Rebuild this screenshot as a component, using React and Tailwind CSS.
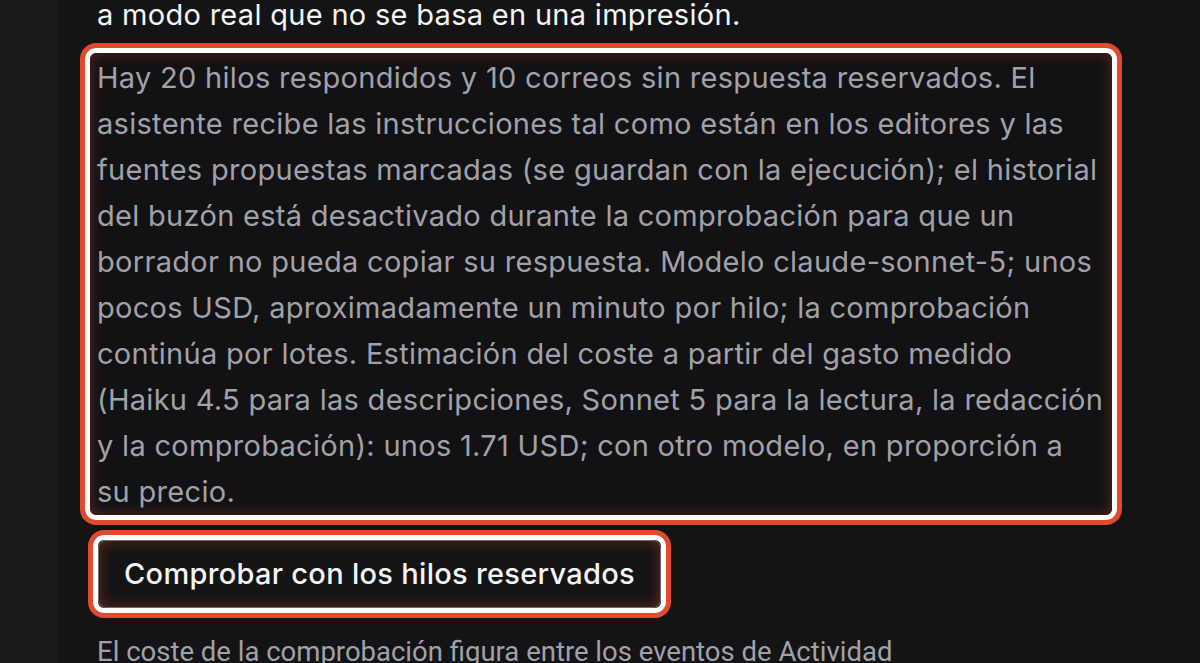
export default function App() {
  return (
    <div className="flex h-[663px] w-full overflow-hidden bg-[#141416]">
      <div className="w-[57px] shrink-0 bg-[#1b1b1e]" />
      <div className="flex min-w-0 flex-1 flex-col pl-[23px] pr-[78px]">
        <p className="-mt-[8px] pl-[17px] font-['Inter',sans-serif] text-[29px] leading-[46px] tracking-[0.3px] text-[#f4f4f5]">
          a modo real que no se basa en una impresión.
        </p>
        <div className="mt-[5px] rounded-[16px] border-[5px] border-[#e24a2e]">
          <div className="rounded-[11px] border-[5px] border-white">
            <p className="rounded-[7px] bg-[#121214] px-[7px] pt-[2px] font-['Inter',sans-serif] text-[29px] leading-[46px] tracking-[0.3px] text-[#a1a1aa] shadow-[inset_0_0_14px_rgba(226,74,46,0.35)]">
              Hay 20 hilos respondidos y 10 correos sin respuesta reservados. El asistente recibe las instrucciones tal como están en los editores y las fuentes propuestas marcadas (se guardan con la ejecución); el historial del buzón está desactivado durante la comprobación para que un borrador no pueda copiar su respuesta. Modelo claude-sonnet-5; unos pocos USD, aproximadamente un minuto por hilo; la comprobación continúa por lotes. Estimación del coste a partir del gasto medido (Haiku 4.5 para las descripciones, Sonnet 5 para la lectura, la redacción y la comprobación): unos 1.71 USD; con otro modelo, en proporción a
              <br />
              su precio.
            </p>
          </div>
        </div>
        <div className="mt-[5px] ml-[8px] self-start rounded-[16px] border-[5px] border-[#e24a2e]">
          <div className="rounded-[11px] border-[5px] border-white">
            <button className="block rounded-[8px] border border-[#6b6b70] bg-[#141416] px-[25px] py-[13px] font-['Inter',sans-serif] text-[29px] font-medium leading-[40px] tracking-[0.3px] text-[#f4f4f5] shadow-[inset_0_0_14px_rgba(226,74,46,0.4)]">
              Comprobar con los hilos reservados
            </button>
          </div>
        </div>
        <p className="mt-[17px] pl-[17px] font-['Roboto',sans-serif] text-[27.5px] leading-[34px] text-[#a1a1aa]">
          El coste de la comprobación figura entre los eventos de Actividad
        </p>
      </div>
    </div>
  );
}
